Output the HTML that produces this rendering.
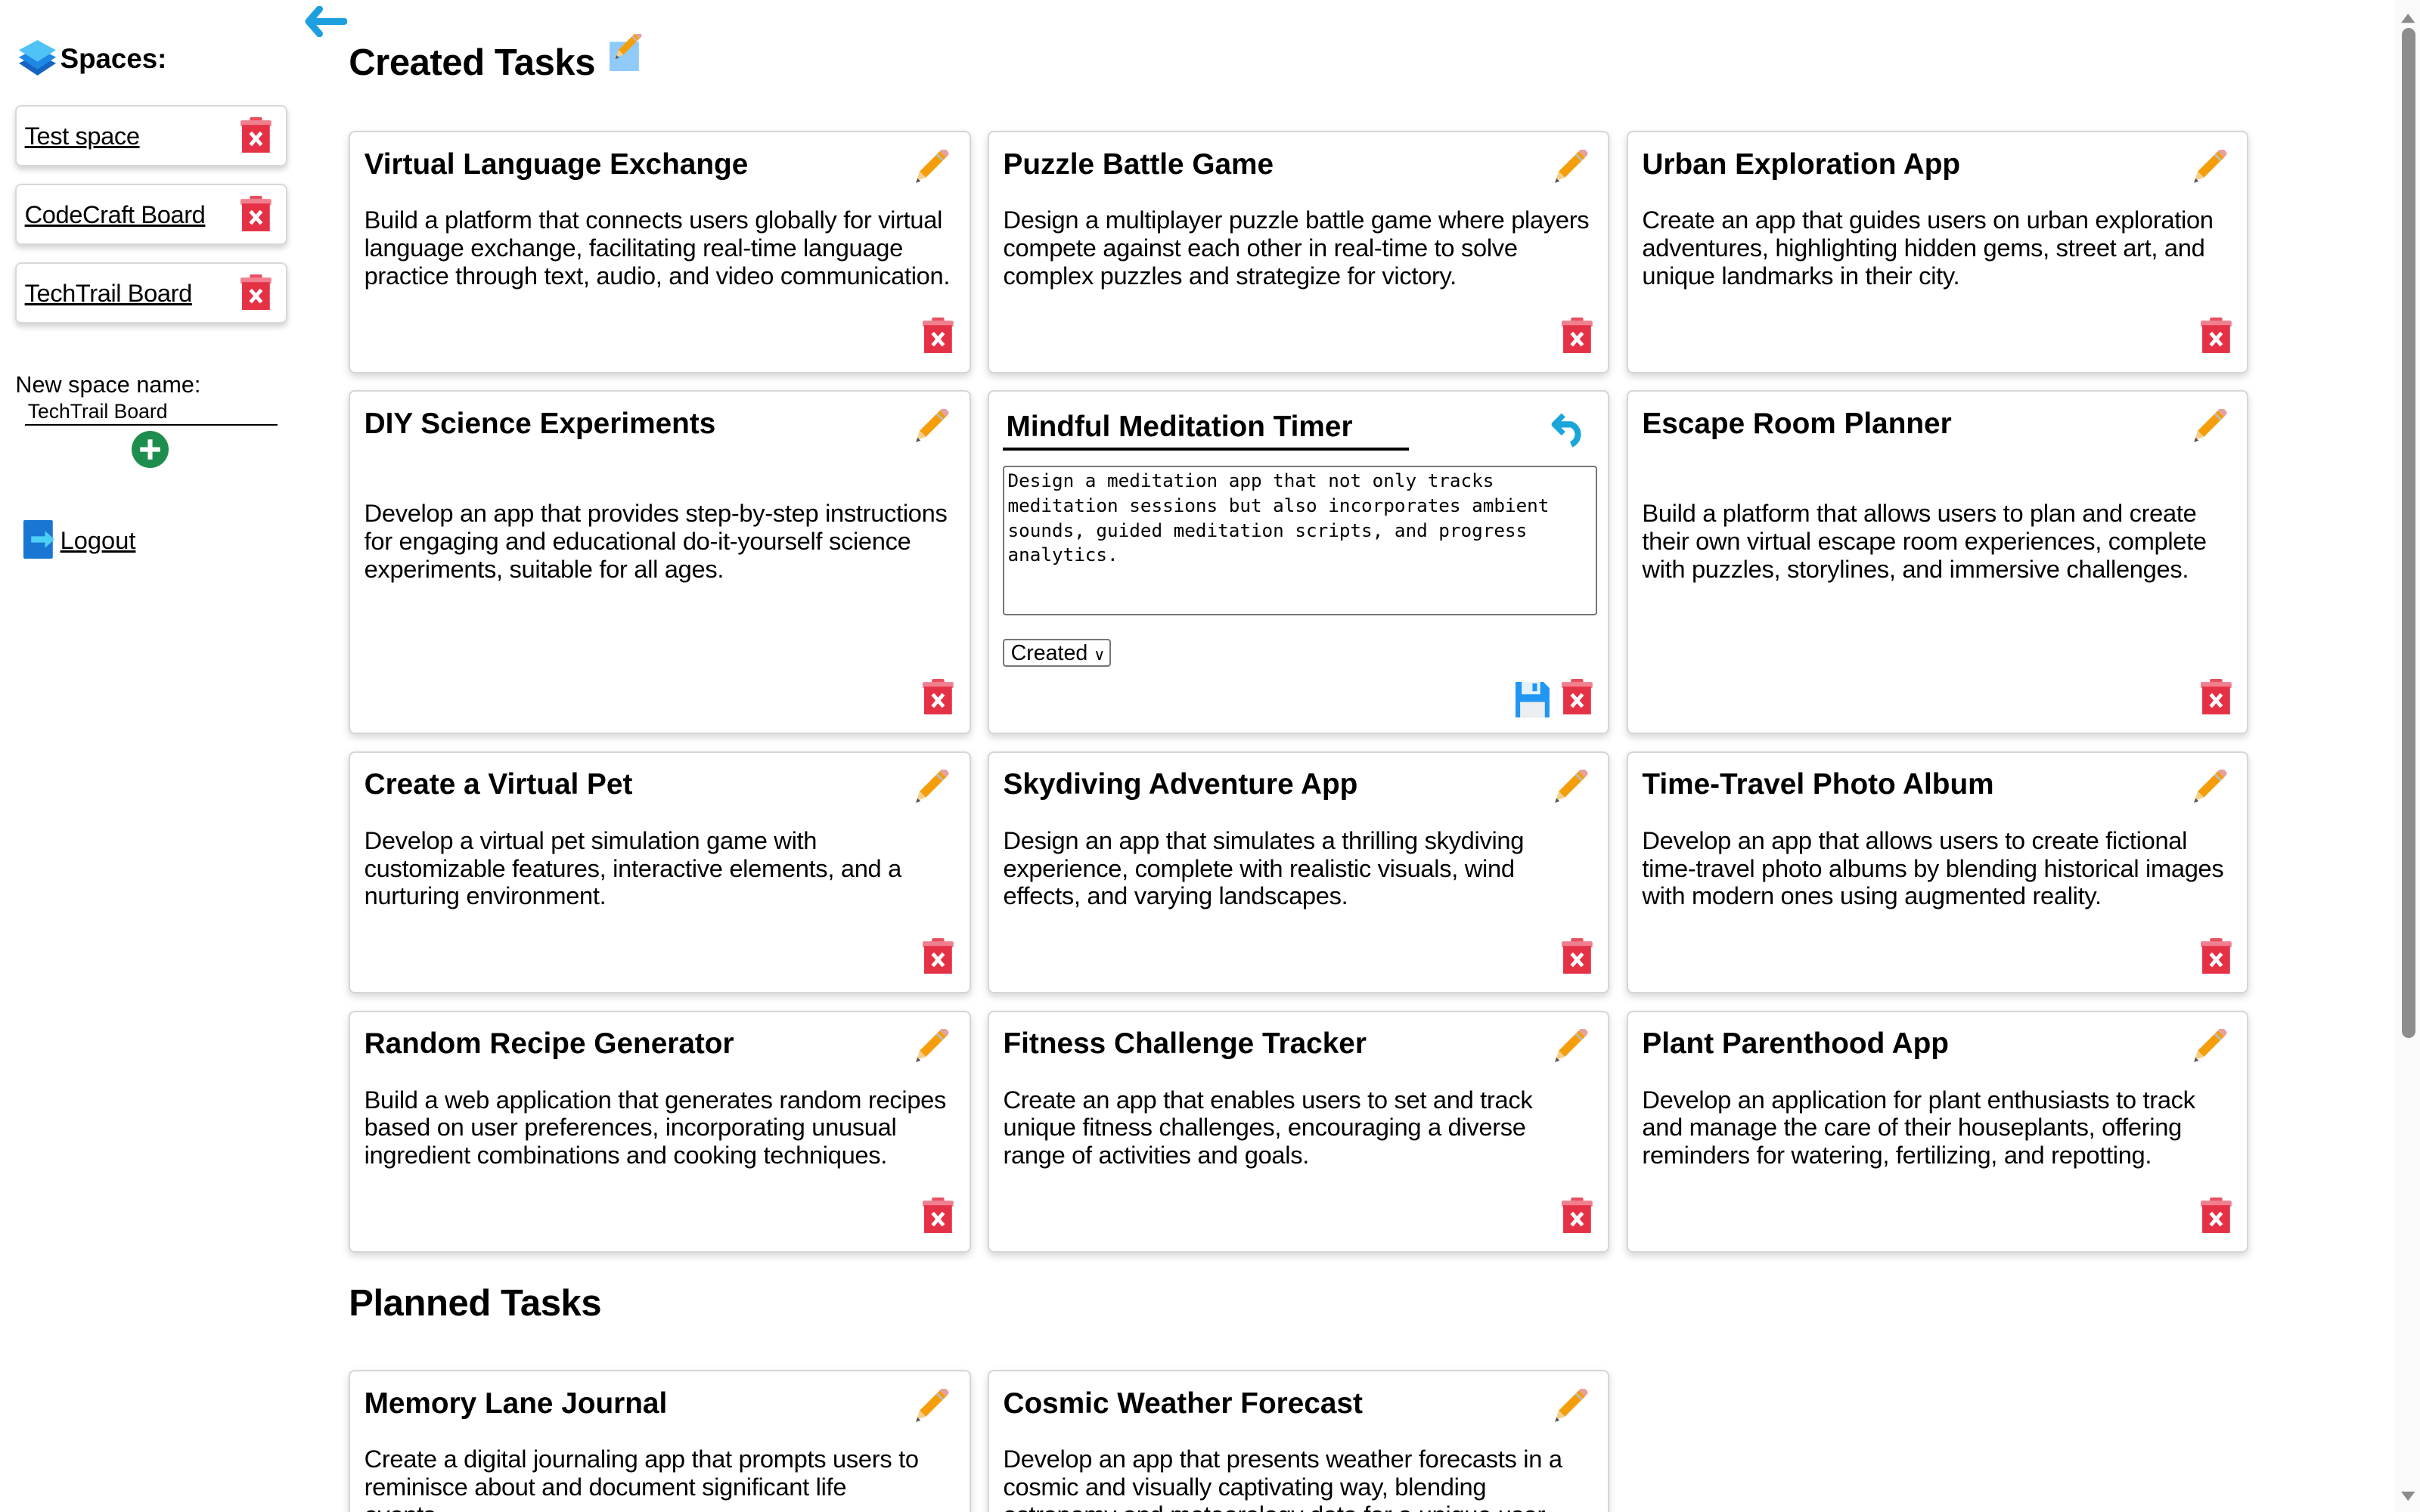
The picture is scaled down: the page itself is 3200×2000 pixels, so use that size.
<!DOCTYPE html>
<html><head><meta charset="utf-8"><style>
html,body{margin:0;padding:0;background:#fff;overflow:hidden;width:3200px;height:2000px}
#w{zoom:2.040816;width:1568px;height:980px;position:relative;overflow:hidden;font-family:"Liberation Sans",Arial,sans-serif;color:#000}
.a{position:absolute}
.sc{position:absolute;left:10px;width:174px;height:38px;border:1px solid #d8d8d8;border-radius:4px;box-shadow:0 2px 4px rgba(0,0,0,.18);background:#fff}
.sc span{position:absolute;left:5px;top:10px;font-size:16px;text-decoration:underline;letter-spacing:-.2px}
.sc svg{position:absolute;left:145px;top:7px}
.card{position:absolute;width:401px;border:1px solid #d6d6d6;border-radius:4px;box-shadow:0 2px 5px rgba(0,0,0,.16);background:#fff;overflow:hidden}
.card h3{position:absolute;left:9px;top:10px;margin:0;font-size:19px;font-weight:bold;letter-spacing:0;white-space:nowrap}
.card p{position:absolute;left:9px;top:48px;margin:0;font-size:16px;line-height:18px;letter-spacing:-.15px;white-space:nowrap}
.card .pen{position:absolute;left:363px;top:11px}
.card .tr{position:absolute;left:371px;bottom:11px}
h2{position:absolute;margin:0;font-size:24px;font-weight:bold;letter-spacing:-.2px}
</style></head><body><div id="w">
<svg width="0" height="0" style="position:absolute"><defs>
<g id="trash"><rect x="6" y="0" width="8" height="3" rx="1" fill="#e8505f"/><rect x="0" y="2" width="20" height="4" rx="1" fill="#f08090"/><rect x="1" y="5" width="18" height="18" fill="#e53145"/><path d="M6.5 10l7 8M13.5 10l-7 8" stroke="#fff" stroke-width="2.4"/></g>
<g id="pen"><path d="M4 20l2-6L19 1l4 4L10 18z" fill="#f59e0b"/><path d="M19 1l4 4 1-1c1-1 1-2 0-3l-1-1c-1-1-2-1-3 0z" fill="#e5a0a0"/><path d="M17 3l4 4" stroke="#bbb" stroke-width="1.5"/><path d="M4 20l2-6 4 4z" fill="#f5d08a"/><path d="M3.5 21.5l1-3 2 2z" fill="#555"/></g>
</defs></svg>

<svg class="a" style="left:12px;top:26px" width="25" height="26" viewBox="0 0 25 26"><path d="M12.5 9l12 6-12 8-12-8z" fill="#1565c0"/><path d="M12.5 5l12 6-12 8-12-8z" fill="#1e88e5"/><path d="M12.5 0l12 6.5-12 7.5-12-7.5z" fill="#4fc3f7"/></svg>
<div class="a" style="left:39px;top:28px;font-size:18px;font-weight:bold">Spaces:</div>
<div class="sc" style="top:68px"><span>Test space</span><svg width="20" height="24"><use href="#trash"/></svg></div>
<div class="sc" style="top:119px"><span>CodeCraft Board</span><svg width="20" height="24"><use href="#trash"/></svg></div>
<div class="sc" style="top:170px"><span>TechTrail Board</span><svg width="20" height="24"><use href="#trash"/></svg></div>
<div class="a" style="left:10px;top:241px;font-size:15px">New space name:</div>
<div class="a" style="left:18px;top:259px;font-size:13px">TechTrail Board</div>
<div class="a" style="left:16px;top:275px;width:164px;height:1px;background:#000"></div>
<svg class="a" style="left:85px;top:279px" width="25" height="25"><circle cx="12.5" cy="12.5" r="12" fill="#1e8e4e"/><path d="M12.5 6v13M6 12.5h13" stroke="#fff" stroke-width="3"/></svg>
<svg class="a" style="left:15px;top:337px" width="22" height="26"><rect x="0" y="0" width="19" height="25" rx="1" fill="#1976d2"/><path d="M5 12.5h10" stroke="#4dd0f5" stroke-width="4"/><path d="M14 7l6 5.5-6 5.5z" fill="#4dd0f5"/></svg>
<div class="a" style="left:39px;top:341px;font-size:16px;text-decoration:underline">Logout</div>

<svg class="a" style="left:197px;top:4px" width="28" height="20" viewBox="0 0 28 20"><path d="M10 2L3 10l7 8M3 10h23" stroke="#1ea0e0" stroke-width="4.5" fill="none" stroke-linecap="round" stroke-linejoin="round"/></svg>
<h2 style="left:226px;top:27px">Created Tasks</h2>
<svg class="a" style="left:394px;top:22px" width="24" height="24"><rect x="1" y="5" width="19" height="19" fill="#90caf9"/><g transform="translate(2,-1) scale(.8)"><use href="#pen"/></g></svg>

<div class="card" style="left:226px;top:85px;height:155px"><h3>Virtual Language Exchange</h3><svg class="pen" width="26" height="26"><use href="#pen"/></svg><p>Build a platform that connects users globally for virtual<br>language exchange, facilitating real-time language<br>practice through text, audio, and video communication.</p><svg class="tr" width="20" height="24"><use href="#trash"/></svg></div>
<div class="card" style="left:640px;top:85px;height:155px"><h3>Puzzle Battle Game</h3><svg class="pen" width="26" height="26"><use href="#pen"/></svg><p>Design a multiplayer puzzle battle game where players<br>compete against each other in real-time to solve<br>complex puzzles and strategize for victory.</p><svg class="tr" width="20" height="24"><use href="#trash"/></svg></div>
<div class="card" style="left:1054px;top:85px;height:155px"><h3>Urban Exploration App</h3><svg class="pen" width="26" height="26"><use href="#pen"/></svg><p>Create an app that guides users on urban exploration<br>adventures, highlighting hidden gems, street art, and<br>unique landmarks in their city.</p><svg class="tr" width="20" height="24"><use href="#trash"/></svg></div>

<div class="card" style="left:226px;top:253px;height:221px"><h3>DIY Science Experiments</h3><svg class="pen" width="26" height="26"><use href="#pen"/></svg><p style="top:70px">Develop an app that provides step-by-step instructions<br>for engaging and educational do-it-yourself science<br>experiments, suitable for all ages.</p><svg class="tr" width="20" height="24"><use href="#trash"/></svg></div>
<div class="card" style="left:640px;top:253px;height:221px">
 <div class="a" style="left:11px;top:12px;font-size:19px;font-weight:bold">Mindful Meditation Timer</div>
 <div class="a" style="left:9px;top:36px;width:263px;height:2px;background:#000"></div>
 <svg class="a" style="left:364px;top:12px" width="26" height="24" viewBox="0 0 26 24"><path d="M8 3L2 9l6 6" stroke="#1aa6d8" stroke-width="3.5" fill="none" stroke-linejoin="round"/><path d="M3 9h10a7 7 0 0 1 0 13" stroke="#1aa6d8" stroke-width="4" fill="none"/></svg>
 <div class="a" style="left:9px;top:48px;width:385px;height:97px;border:1px solid #767676;border-radius:2px;padding:1px 2px;box-sizing:border-box;font-family:'DejaVu Sans Mono','Liberation Mono',monospace;font-size:11.9px;line-height:16px;white-space:pre">Design a meditation app that not only tracks
meditation sessions but also incorporates ambient
sounds, guided meditation scripts, and progress
analytics.</div>
 <div class="a" style="left:9px;top:160px;width:70px;height:18px;border:1px solid #767676;border-radius:2px;font-size:14px;line-height:17px;padding-left:4px;box-sizing:border-box">Created <span style="font-size:10px">&#8744;</span></div>
 <svg class="a" style="left:341px;top:188px" width="22" height="23"><path d="M0 0h18l4 4v19H0z" fill="#2196f3"/><rect x="4" y="0" width="12" height="8" fill="#e3f2fd"/><rect x="11" y="1" width="3" height="5" fill="#2196f3"/><rect x="3" y="13" width="16" height="10" fill="#eceff1"/></svg>
 <svg class="tr" width="20" height="24"><use href="#trash"/></svg>
</div>
<div class="card" style="left:1054px;top:253px;height:221px"><h3>Escape Room Planner</h3><svg class="pen" width="26" height="26"><use href="#pen"/></svg><p style="top:70px">Build a platform that allows users to plan and create<br>their own virtual escape room experiences, complete<br>with puzzles, storylines, and immersive challenges.</p><svg class="tr" width="20" height="24"><use href="#trash"/></svg></div>

<div class="card" style="left:226px;top:487px;height:155px"><h3>Create a Virtual Pet</h3><svg class="pen" width="26" height="26"><use href="#pen"/></svg><p>Develop a virtual pet simulation game with<br>customizable features, interactive elements, and a<br>nurturing environment.</p><svg class="tr" width="20" height="24"><use href="#trash"/></svg></div>
<div class="card" style="left:640px;top:487px;height:155px"><h3>Skydiving Adventure App</h3><svg class="pen" width="26" height="26"><use href="#pen"/></svg><p>Design an app that simulates a thrilling skydiving<br>experience, complete with realistic visuals, wind<br>effects, and varying landscapes.</p><svg class="tr" width="20" height="24"><use href="#trash"/></svg></div>
<div class="card" style="left:1054px;top:487px;height:155px"><h3>Time-Travel Photo Album</h3><svg class="pen" width="26" height="26"><use href="#pen"/></svg><p>Develop an app that allows users to create fictional<br>time-travel photo albums by blending historical images<br>with modern ones using augmented reality.</p><svg class="tr" width="20" height="24"><use href="#trash"/></svg></div>

<div class="card" style="left:226px;top:655px;height:155px"><h3>Random Recipe Generator</h3><svg class="pen" width="26" height="26"><use href="#pen"/></svg><p>Build a web application that generates random recipes<br>based on user preferences, incorporating unusual<br>ingredient combinations and cooking techniques.</p><svg class="tr" width="20" height="24"><use href="#trash"/></svg></div>
<div class="card" style="left:640px;top:655px;height:155px"><h3>Fitness Challenge Tracker</h3><svg class="pen" width="26" height="26"><use href="#pen"/></svg><p>Create an app that enables users to set and track<br>unique fitness challenges, encouraging a diverse<br>range of activities and goals.</p><svg class="tr" width="20" height="24"><use href="#trash"/></svg></div>
<div class="card" style="left:1054px;top:655px;height:155px"><h3>Plant Parenthood App</h3><svg class="pen" width="26" height="26"><use href="#pen"/></svg><p>Develop an application for plant enthusiasts to track<br>and manage the care of their houseplants, offering<br>reminders for watering, fertilizing, and repotting.</p><svg class="tr" width="20" height="24"><use href="#trash"/></svg></div>

<h2 style="left:226px;top:831px">Planned Tasks</h2>
<div class="card" style="left:226px;top:888px;height:100px;border-bottom:0"><h3>Memory Lane Journal</h3><svg class="pen" width="26" height="26"><use href="#pen"/></svg><p>Create a digital journaling app that prompts users to<br>reminisce about and document significant life<br>events.</p></div>
<div class="card" style="left:640px;top:888px;height:100px;border-bottom:0"><h3>Cosmic Weather Forecast</h3><svg class="pen" width="26" height="26"><use href="#pen"/></svg><p>Develop an app that presents weather forecasts in a<br>cosmic and visually captivating way, blending<br>astronomy and meteorology data for a unique user</p></div>

<div class="a" style="left:1552px;top:0;width:16px;height:980px;background:#fafafa"></div>
<svg class="a" style="left:1555px;top:8px" width="11" height="8"><path d="M5.5 1L10 7H1z" fill="#8a8a8a"/></svg>
<div class="a" style="left:1556px;top:18px;width:9px;height:655px;background:#8d8d8d;border-radius:5px"></div>
<svg class="a" style="left:1555px;top:966px" width="11" height="8"><path d="M5.5 7L10 1H1z" fill="#8a8a8a"/></svg>
</div></body></html>
